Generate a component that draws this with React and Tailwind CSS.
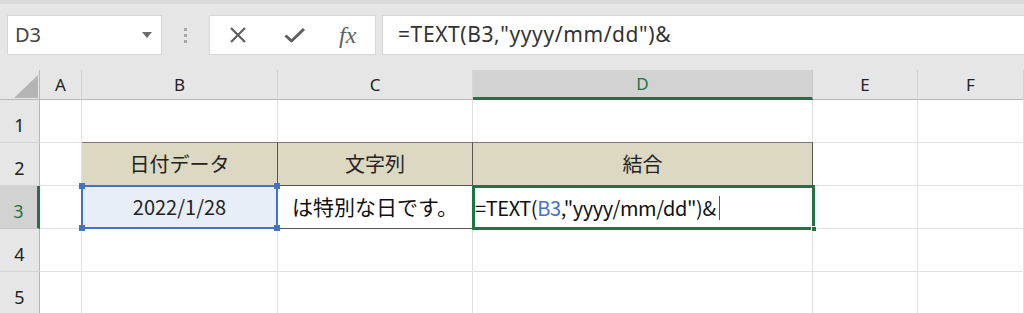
export default function App() {
  const cols = ["A", "B", "C", "D", "E", "F"];
  const grid = "grid grid-cols-[40px_42px_196px_195px_340px_105px_1fr]";
  const cell = "border-r border-b border-[#e1e1e1] bg-white";
  const jp = { fontFamily: '"Noto Sans CJK JP", "Noto Sans", sans-serif' };

  return (
    <div className="w-[1024px] h-[313px] overflow-hidden bg-white" style={{ fontFamily: '"Noto Sans", "Noto Sans CJK JP", sans-serif' }}>
      {/* formula bar area */}
      <div className="h-[70px] bg-[#e6e6e6] flex items-start pt-[15px] pl-[7px] border-t-[4px] border-[#dadada]">
        <div className="w-[155px] h-[40px] -mt-[4px] bg-white border border-[#d6d6d6] flex items-center justify-between pl-[7px] pr-[9px]">
          <span className="text-[20px] text-[#444]">D3</span>
          <svg width="10" height="6" viewBox="0 0 10 6"><path d="M0 0h10L5 6z" fill="#6b6b6b" /></svg>
        </div>
        <div className="w-[47px] h-[40px] -mt-[4px] flex flex-col items-center justify-center gap-[3px]">
          <span className="w-[3px] h-[3px] bg-[#a8a8a8]" />
          <span className="w-[3px] h-[3px] bg-[#a8a8a8]" />
          <span className="w-[3px] h-[3px] bg-[#a8a8a8]" />
        </div>
        <div className="w-[167px] h-[40px] -mt-[4px] bg-white border border-[#d6d6d6] flex items-center pl-[19px]">
          <svg width="18" height="18" viewBox="0 0 18 18">
            <path d="M2 2L16 16M16 2L2 16" stroke="#5f5f5f" strokeWidth="2.2" />
          </svg>
          <svg width="22" height="18" viewBox="0 0 22 18" className="ml-[37px]">
            <path d="M1.5 9.5L7.5 15L20 3" stroke="#5f5f5f" strokeWidth="3" fill="none" strokeLinejoin="round" />
          </svg>
          <span className="ml-[33px] text-[24px] italic text-[#5f5f5f] leading-none" style={{ fontFamily: '"Liberation Serif", serif' }}>fx</span>
        </div>
        <div className="ml-[6px] flex-1 h-[40px] -mt-[4px] bg-white border-y border-l border-[#d6d6d6] flex items-center pl-[15px]">
          <span className="text-[21px] tracking-[0.6px] text-[#333]">=TEXT(B3,"yyyy/mm/dd")&amp;</span>
        </div>
      </div>

      {/* column headers */}
      <div className={`${grid} h-[30px]`}>
        <div className="bg-[#e6e6e6] border-r border-b border-[#b8b8b8] relative">
          <svg width="24" height="23" viewBox="0 0 24 23" className="absolute left-[14px] top-[5px]">
            <path d="M24 0V23H0z" fill="#b4b4b4" />
          </svg>
        </div>
        {cols.map((c) => (
          <div
            key={c}
            className={
              c === "D"
                ? "bg-[#d2d2d2] border-r border-[#c6c6c6] border-b-[3px] border-b-[#217346] text-[#217346] flex items-center justify-center text-[17px]"
                : "bg-[#e6e6e6] border-r border-b border-r-[#d4d4d4] border-b-[#b8b8b8] text-[#222] flex items-center justify-center text-[17px]"
            }
          >
            {c}
          </div>
        ))}
      </div>

      {/* rows */}
      {[1, 2, 3, 4, 5].map((r) => (
        <div key={r} className={`${grid} h-[43px]`}>
          <div
            className={
              r === 3
                ? "bg-[#d2d2d2] border-r-[3px] border-r-[#217346] border-b border-b-[#c8c8c8] text-[#217346] flex items-end justify-center pb-[3px] text-[18px]"
                : "bg-[#e6e6e6] border-r border-b border-r-[#b8b8b8] border-b-[#d4d4d4] text-[#222] flex items-end justify-center pb-[3px] text-[18px]"
            }
          >
            {r}
          </div>
          <div className={cell} />
          {r === 2 ? (
            <>
              <div className="bg-[#ddd8c2] border-t border-r border-b border-t-[#7a7a7a] border-r-[#555] border-b-[#555] -mt-px flex items-center justify-center text-[20px] text-[#222]" style={jp}>日付データ</div>
              <div className="bg-[#ddd8c2] border-t border-r border-b border-t-[#7a7a7a] border-r-[#555] border-b-[#555] -mt-px flex items-center justify-center text-[20px] text-[#222]" style={jp}>文字列</div>
              <div className="bg-[#ddd8c2] border-t border-r border-b border-t-[#7a7a7a] border-r-[#555] border-b-[#555] -mt-px flex items-center justify-center text-[20px] text-[#222]" style={jp}>結合</div>
            </>
          ) : r === 3 ? (
            <>
              <div className="relative bg-[#e8eef8] border-r border-b border-[#555] flex items-center justify-center text-[20px] text-[#222]" style={jp}>
                2022/1/28
                <div className="absolute -left-px -top-px -right-px -bottom-px border-2 border-[#4472c4]" />
                <span className="absolute -left-[3px] -top-[3px] w-[6px] h-[6px] bg-[#4472c4]" />
                <span className="absolute -right-[3px] -top-[3px] w-[6px] h-[6px] bg-[#4472c4]" />
                <span className="absolute -left-[3px] -bottom-[3px] w-[6px] h-[6px] bg-[#4472c4]" />
                <span className="absolute -right-[3px] -bottom-[3px] w-[6px] h-[6px] bg-[#4472c4]" />
              </div>
              <div className="bg-white border-r border-b border-[#555] flex items-center justify-center text-[21px] text-[#111]" style={jp}>は特別な日です。</div>
              <div className="relative bg-white flex items-center pl-[2px] text-[20px] tracking-[-0.4px] text-[#111]" style={jp}>
                <span>=TEXT(<span className="text-[#4472c4]">B3</span>,"yyyy/mm/dd")&amp;</span>
                <span className="ml-[3px] w-px h-[24px] bg-[#555]" />
                <div className="absolute -left-px -top-px right-[-2px] bottom-[-1px] border-[3px] border-[#217346]" />
                <span className="absolute right-[-4px] bottom-[-3px] w-[6px] h-[6px] bg-[#217346] border border-white" />
              </div>
            </>
          ) : (
            <>
              <div className={cell} />
              <div className={cell} />
              <div className={cell} />
            </>
          )}
          <div className={cell} />
          <div className={cell} />
        </div>
      ))}
    </div>
  );
}
